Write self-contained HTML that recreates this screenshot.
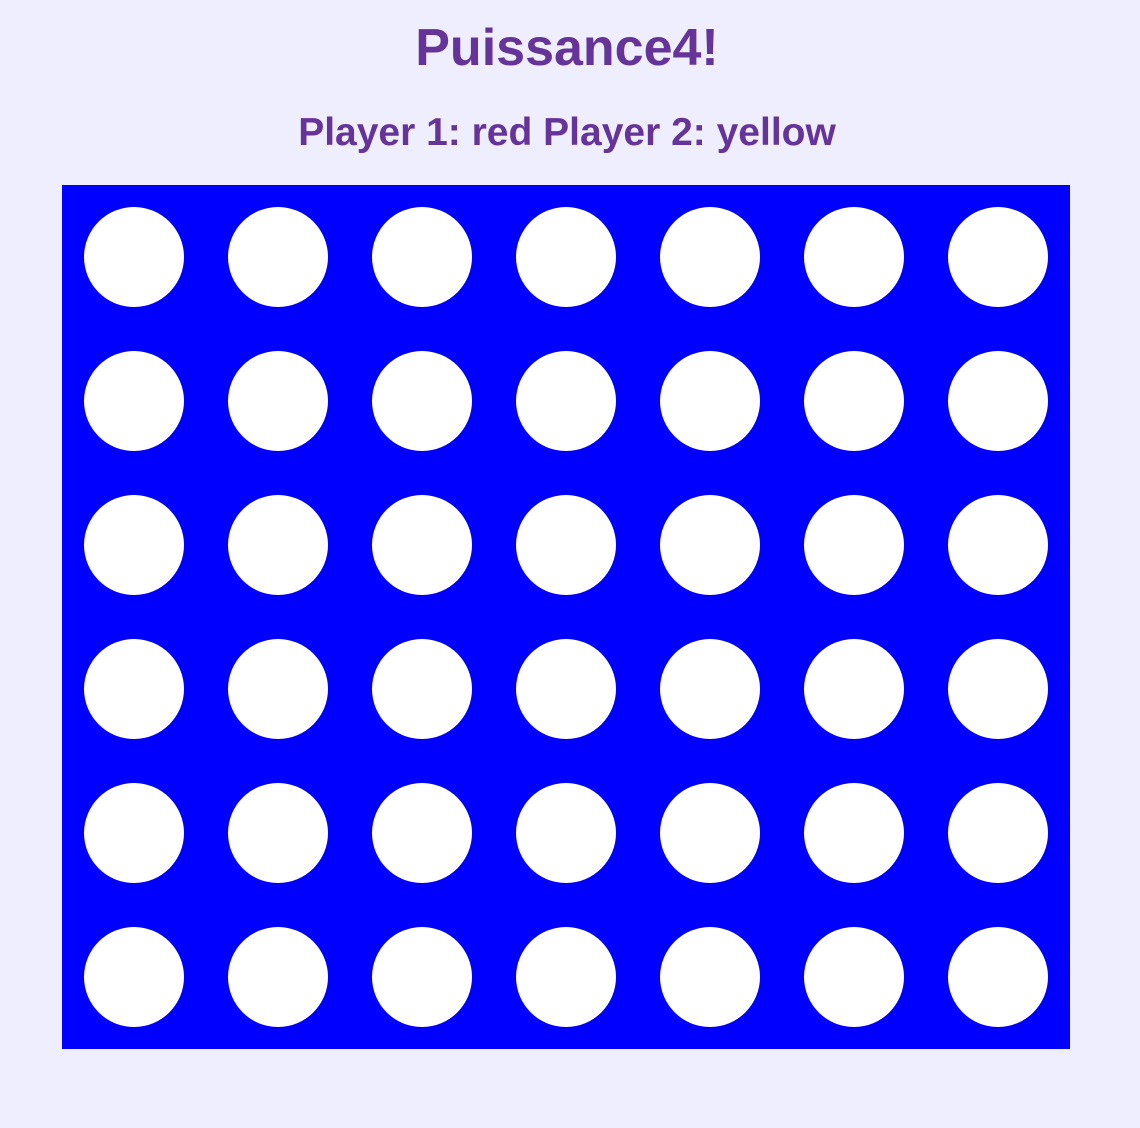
<!DOCTYPE html>
<html><head><style>
html,body{margin:0;padding:0;background:#eeeeff;width:1140px;height:1128px;overflow:hidden}
.t{position:absolute;left:0;width:1134px;text-align:center;color:#663399;font-family:"Liberation Sans",sans-serif;font-weight:bold;white-space:nowrap}
#h1{top:18px;font-size:52px;letter-spacing:0}
#h2{top:111px;font-size:39px;letter-spacing:0}
</style></head><body>
<div class="t" id="h1">Puissance4!</div>
<div class="t" id="h2">Player 1: red Player 2: yellow</div>
<svg style="position:absolute;left:62px;top:185px" width="1008" height="864"><rect width="1008" height="864" fill="#0000ff"/><g fill="#fff">
<circle cx="72" cy="72" r="50"/><circle cx="216" cy="72" r="50"/><circle cx="360" cy="72" r="50"/><circle cx="504" cy="72" r="50"/><circle cx="648" cy="72" r="50"/><circle cx="792" cy="72" r="50"/><circle cx="936" cy="72" r="50"/>
<circle cx="72" cy="216" r="50"/><circle cx="216" cy="216" r="50"/><circle cx="360" cy="216" r="50"/><circle cx="504" cy="216" r="50"/><circle cx="648" cy="216" r="50"/><circle cx="792" cy="216" r="50"/><circle cx="936" cy="216" r="50"/>
<circle cx="72" cy="360" r="50"/><circle cx="216" cy="360" r="50"/><circle cx="360" cy="360" r="50"/><circle cx="504" cy="360" r="50"/><circle cx="648" cy="360" r="50"/><circle cx="792" cy="360" r="50"/><circle cx="936" cy="360" r="50"/>
<circle cx="72" cy="504" r="50"/><circle cx="216" cy="504" r="50"/><circle cx="360" cy="504" r="50"/><circle cx="504" cy="504" r="50"/><circle cx="648" cy="504" r="50"/><circle cx="792" cy="504" r="50"/><circle cx="936" cy="504" r="50"/>
<circle cx="72" cy="648" r="50"/><circle cx="216" cy="648" r="50"/><circle cx="360" cy="648" r="50"/><circle cx="504" cy="648" r="50"/><circle cx="648" cy="648" r="50"/><circle cx="792" cy="648" r="50"/><circle cx="936" cy="648" r="50"/>
<circle cx="72" cy="792" r="50"/><circle cx="216" cy="792" r="50"/><circle cx="360" cy="792" r="50"/><circle cx="504" cy="792" r="50"/><circle cx="648" cy="792" r="50"/><circle cx="792" cy="792" r="50"/><circle cx="936" cy="792" r="50"/>
</g></svg>
</body></html>
